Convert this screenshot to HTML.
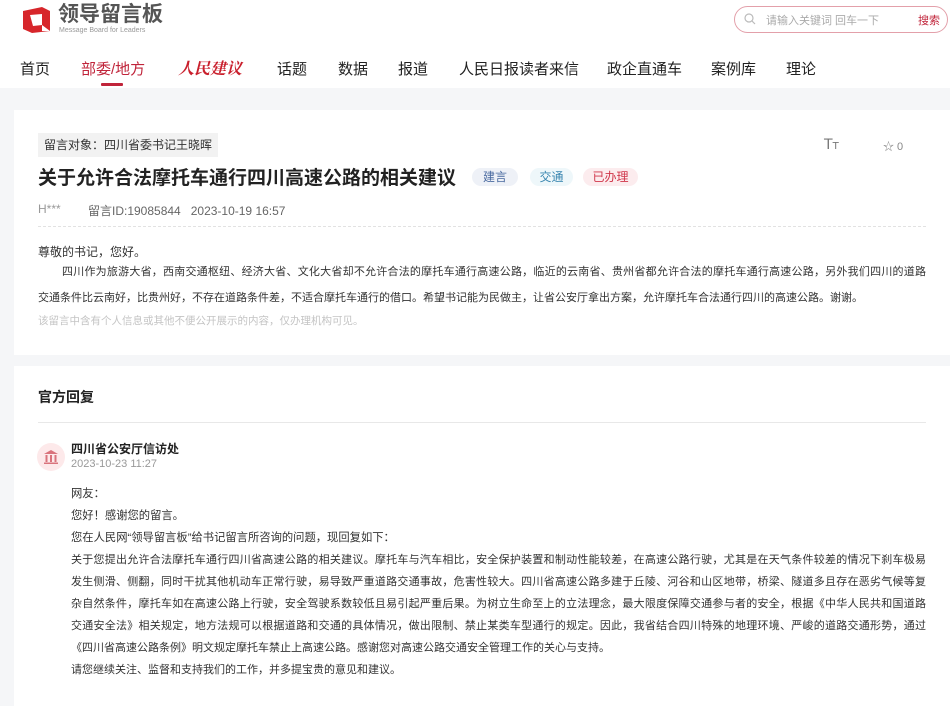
<!DOCTYPE html>
<html><head><meta charset="utf-8"><style>
*{margin:0;padding:0;box-sizing:border-box}
body{width:950px;height:706px;overflow:hidden;background:#f5f6f8;font-family:"Liberation Sans","Noto Sans CJK SC",sans-serif;color:#333;position:relative}
.hdr{position:absolute;left:0;top:0;width:950px;height:88px;background:#fff}
.abs{position:absolute;white-space:nowrap}
.nav{top:58px;font-size:15px;color:#222}
.card{position:absolute;left:14px;width:940px;background:#fff}
.tag{position:absolute;top:168px;height:18px;line-height:18px;font-size:12px;border-radius:9px;text-align:center}
.p{font-size:12px;color:#333}
.j{display:block;white-space:nowrap;text-align:justify;text-align-last:justify}
.l{display:block;white-space:nowrap}
</style></head><body>
<div class="hdr">
 <svg class="abs" style="left:20px;top:5px" width="32" height="30" viewBox="0 0 32 30">
  <path d="M3 6 L22 2 L30 6 L30 26 L12 28 L3 24 Z" fill="#d7262b"/>
  <path d="M10 10 L22 9 L22 20 L13 21 Z" fill="#fff"/>
  <path d="M22 20 L30 26 L22 26 Z" fill="#fff"/>
 </svg>
 <div class="abs" style="left:58px;top:3px;font-size:21px;line-height:24px;font-weight:bold;color:#555">领导留言板</div>
 <div class="abs" style="left:59px;top:27px;font-size:7px;line-height:8px;color:#999">Message Board for Leaders</div>
 <div class="abs" style="left:734px;top:6px;width:214px;height:27px;border:1px solid #e3a0aa;border-radius:14px"></div>
 <svg class="abs" style="left:744px;top:13px" width="12" height="12" viewBox="0 0 12 12"><circle cx="5" cy="5" r="4" fill="none" stroke="#bbb" stroke-width="1.2"/><path d="M8 8 L11 11" stroke="#bbb" stroke-width="1.2"/></svg>
 <div class="abs" style="left:766px;top:12px;font-size:11px;color:#aaa">请输入关键词 回车一下</div>
 <div class="abs" style="left:918px;top:12px;font-size:11px;color:#c0243a">搜索</div>
 <div class="abs nav" style="left:20px">首页</div>
 <div class="abs nav" style="left:81px;color:#c0243a">部委/地方</div>
 <div class="abs" style="left:101px;top:83px;width:22px;height:3px;background:#c0243a;border-radius:1px"></div>
 <div class="abs" style="left:178px;top:56px;font-size:16px;color:#c91f2c;font-style:italic;font-weight:bold;font-family:'Noto Serif CJK SC',serif">人民建议</div>
 <div class="abs nav" style="left:277px">话题</div>
 <div class="abs nav" style="left:338px">数据</div>
 <div class="abs nav" style="left:398px">报道</div>
 <div class="abs nav" style="left:459px">人民日报读者来信</div>
 <div class="abs nav" style="left:607px">政企直通车</div>
 <div class="abs nav" style="left:711px">案例库</div>
 <div class="abs nav" style="left:786px">理论</div>
</div>

<div class="card" style="top:110px;height:245px"></div>
<div class="abs" style="left:38px;top:133px;height:24px;line-height:24px;padding:0 6px;background:#f2f2f2;font-size:12px;color:#333">留言对象：四川省委书记王晓晖</div>
<div class="abs" style="left:824px;top:137px;font-size:14px;color:#777;font-family:'DejaVu Sans',sans-serif">T<span style="font-size:10px">T</span></div>
<div class="abs" style="left:883px;top:138px;font-size:11px;color:#888">☆ 0</div>
<div class="abs" style="left:38px;top:163px;font-size:19px;font-weight:bold;color:#222">关于允许合法摩托车通行四川高速公路的相关建议</div>
<div class="tag" style="left:472px;width:46px;background:#eef1f7;color:#4a6aa0">建言</div>
<div class="tag" style="left:530px;width:43px;background:#eef7fa;color:#3a86b0">交通</div>
<div class="tag" style="left:583px;width:55px;background:#fcecee;color:#d0364a">已办理</div>
<div class="abs" style="left:38px;top:202px;font-size:12px;color:#999">H***</div>
<div class="abs" style="left:88px;top:202px;font-size:12px;color:#666">留言ID:19085844&nbsp;&nbsp;&nbsp;2023-10-19 16:57</div>
<div class="abs" style="left:38px;top:226px;width:888px;border-top:1px dashed #e2e2e2"></div>
<div class="abs p" style="left:38px;top:243px">尊敬的书记，您好。</div>
<div class="abs p" style="left:62px;top:259px;width:864px;line-height:26px;font-size:11px"><span class="j">四川作为旅游大省，西南交通枢纽、经济大省、文化大省却不允许合法的摩托车通行高速公路，临近的云南省、贵州省都允许合法的摩托车通行高速公路，另外我们四川的道路</span></div>
<div class="abs p" style="left:38px;top:285px;line-height:26px;font-size:11px">交通条件比云南好，比贵州好，不存在道路条件差，不适合摩托车通行的借口。希望书记能为民做主，让省公安厅拿出方案，允许摩托车合法通行四川的高速公路。谢谢。</div>
<div class="abs" style="left:38px;top:313px;font-size:10.5px;color:#c4c4c4">该留言中含有个人信息或其他不便公开展示的内容，仅办理机构可见。</div>

<div class="card" style="top:366px;height:340px"></div>
<div class="abs" style="left:38px;top:387px;font-size:14px;font-weight:bold;color:#222">官方回复</div>
<div class="abs" style="left:38px;top:422px;width:888px;border-top:1px solid #e8e8e8"></div>
<div class="abs" style="left:37px;top:443px;width:28px;height:28px;border-radius:50%;background:#fde9ea"></div>
<svg class="abs" style="left:43px;top:449px" width="16" height="16" viewBox="0 0 16 16" fill="#d9737c"><path d="M8 1 L15 5 L1 5 Z"/><rect x="2.5" y="6" width="2" height="7"/><rect x="7" y="6" width="2" height="7"/><rect x="11.5" y="6" width="2" height="7"/><rect x="1" y="13.5" width="14" height="1.5"/></svg>
<div class="abs" style="left:71px;top:440px;font-size:12px;font-weight:bold;color:#222">四川省公安厅信访处</div>
<div class="abs" style="left:71px;top:458px;font-size:11px;color:#999">2023-10-23 11:27</div>
<div class="abs p" style="left:71px;top:483px;width:855px;line-height:22px;font-size:11px">
<span class="l" style="font-size:11.3px">网友：</span>
<span class="l" style="font-size:11.3px">您好！感谢您的留言。</span>
<span class="l" style="font-size:11.3px">您在人民网“领导留言板”给书记留言所咨询的问题，现回复如下：</span>
<span class="j">关于您提出允许合法摩托车通行四川省高速公路的相关建议。摩托车与汽车相比，安全保护装置和制动性能较差，在高速公路行驶，尤其是在天气条件较差的情况下刹车极易</span>
<span class="j">发生侧滑、侧翻，同时干扰其他机动车正常行驶，易导致严重道路交通事故，危害性较大。四川省高速公路多建于丘陵、河谷和山区地带，桥梁、隧道多且存在恶劣气候等复</span>
<span class="j">杂自然条件，摩托车如在高速公路上行驶，安全驾驶系数较低且易引起严重后果。为树立生命至上的立法理念，最大限度保障交通参与者的安全，根据《中华人民共和国道路</span>
<span class="j">交通安全法》相关规定，地方法规可以根据道路和交通的具体情况，做出限制、禁止某类车型通行的规定。因此，我省结合四川特殊的地理环境、严峻的道路交通形势，通过</span>
<span class="l">《四川省高速公路条例》明文规定摩托车禁止上高速公路。感谢您对高速公路交通安全管理工作的关心与支持。</span>
<span class="l">请您继续关注、监督和支持我们的工作，并多提宝贵的意见和建议。</span>
</div>
</body></html>
